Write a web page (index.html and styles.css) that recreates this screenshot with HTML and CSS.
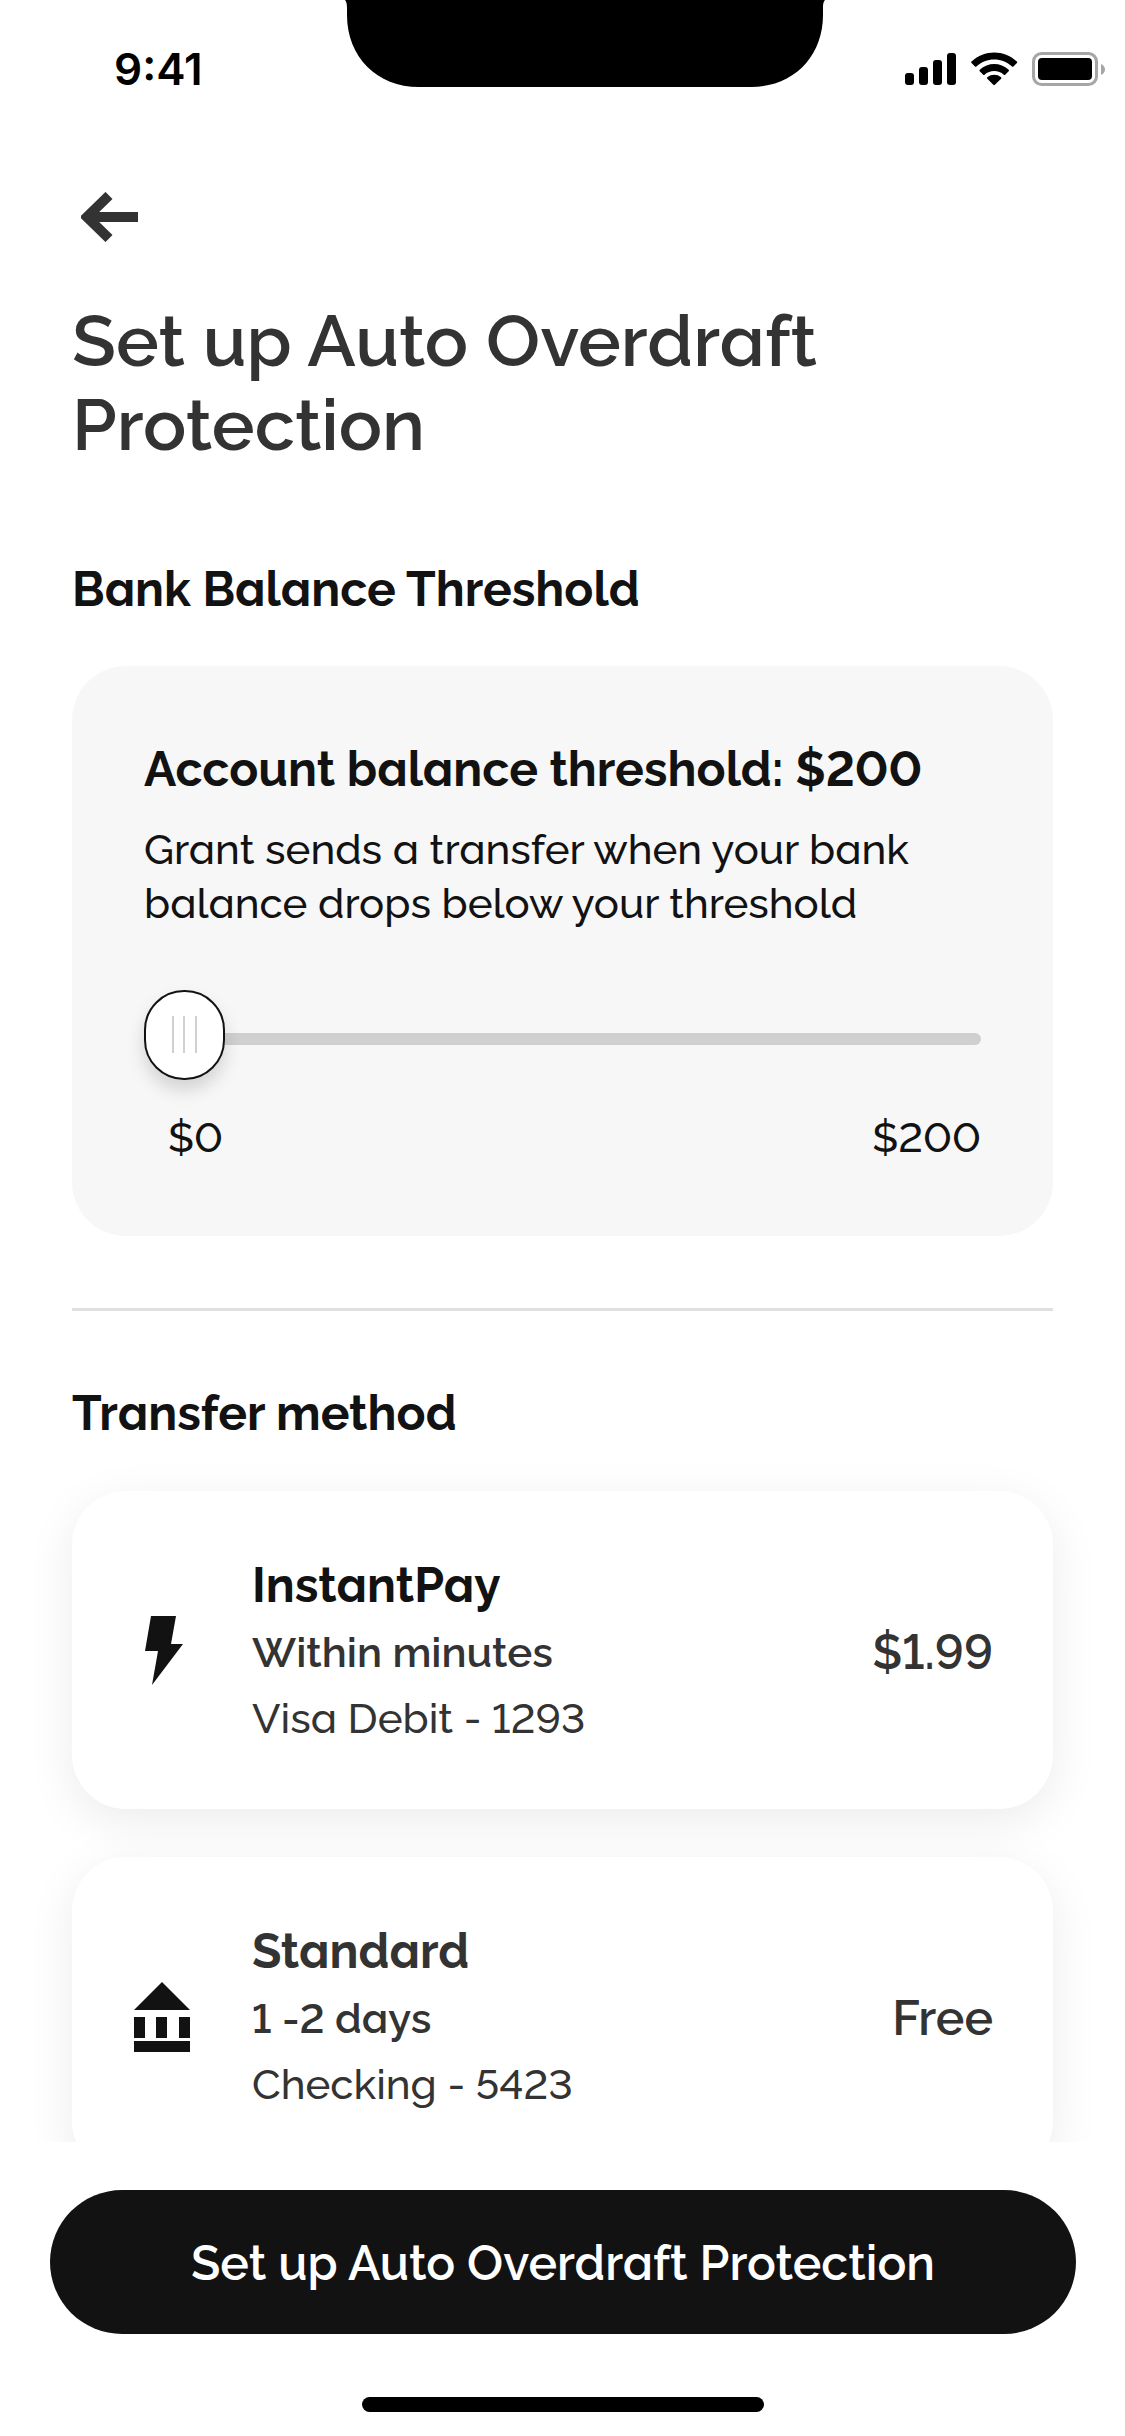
FILE: index.html
```
<!DOCTYPE html>
<html lang="en">
<head>
<meta charset="utf-8">
<meta name="viewport" content="width=device-width, initial-scale=1">
<title>Set up Auto Overdraft Protection</title>
<link rel="stylesheet" href="styles.css">
</head>
<body>
<div class="app">
  <header class="status">
    <span class="status-time">9:41</span>
    <svg class="notch" viewBox="0 0 480 87" aria-hidden="true"><path d="M0 0h480c-1 1-2 3-2 8v7c0 42-30 72-72 72H74C32 87 2 57 2 15V8c0-5-1-7-2-8z"/></svg>
    <svg class="status-icons" viewBox="0 0 202 36" role="img" aria-label="Signal, Wi-Fi and battery">
      <rect x="1" y="21" width="9" height="12" rx="3"/>
      <rect x="15" y="15" width="9" height="18" rx="3"/>
      <rect x="29" y="8" width="9" height="25" rx="3"/>
      <rect x="43" y="1" width="9" height="32" rx="3"/>
      <g transform="translate(-7 0) scale(1.08 1.07)">
        <path d="M90 7c6 0 12 2.400 16.500 6.600.4.400 1 .400 1.300 0l3.200-3.300c.4-.4.4-1 0-1.400C99-2.400 81-2.400 69 8.900c-.4.4-.4 1 0 1.400l3.200 3.300c.3.400.9.400 1.300 0C78 9.400 84 7 90 7z"/>
        <path d="M90 17.800c3.300 0 6.500 1.200 8.900 3.400.4.400 1 .400 1.300 0l3.200-3.300c.4-.4.4-1 0-1.400-7.600-7-19.200-7-26.800 0-.4.4-.4 1 0 1.400l3.200 3.300c.3.400.9.400 1.300 0 2.400-2.200 5.600-3.400 8.900-3.400z"/>
        <path d="M96.400 25c.4-.4.4-1 0-1.400-3.700-3.100-9.100-3.100-12.800 0-.4.4-.4 1 0 1.400l5.600 5.700c.4.400 1 .400 1.400 0z"/>
      </g>
      <rect class="battery-case" x="129.500" y="1.500" width="63" height="31" rx="8"/>
      <rect x="134" y="6" width="54" height="22" rx="4"/>
      <path class="battery-tip" d="M197 12v11c2.500-1 4-3 4-5.500s-1.500-4.500-4-5.500z"/>
    </svg>
  </header>

  <main class="content">
    <button class="back" type="button" aria-label="Back">
      <svg class="back-icon" viewBox="0 0 57 50" aria-hidden="true"><path d="M28 3.500 6 25l22 21.500M7 25h50"/></svg>
    </button>
    <h1 class="title">Set up Auto Overdraft Protection</h1>

    <section class="section">
      <h2 class="section-title">Bank Balance Threshold</h2>
      <div class="threshold">
        <label class="threshold-title" for="threshold">Account balance threshold: $200</label>
        <p class="threshold-text">Grant sends a transfer when your bank balance drops below your threshold</p>
        <input class="slider" id="threshold" type="range" min="0" max="200" value="0">
        <div class="scale"><span>$0</span><span>$200</span></div>
      </div>
    </section>

    <hr class="divider">

    <section class="section">
      <h2 class="section-title">Transfer method</h2>
      <div class="methods">
        <button class="method" type="button">
          <svg class="method-icon" viewBox="0 2 72 72" aria-hidden="true"><path d="M23 2h25l-5 28h12L24 71l6-34H17z"/></svg>
          <span class="method-body">
            <span class="method-name">InstantPay</span>
            <span class="method-time">Within minutes</span>
            <span class="method-account">Visa Debit - 1293</span>
          </span>
          <span class="method-price">$1.99</span>
        </button>
        <button class="method" type="button">
          <svg class="method-icon" viewBox="0 1 72 72" aria-hidden="true"><path d="M34 1 62 29H6zM6 36h11v21H6zM28 36h11v21H28zM51 36h11v21H51zM6 60h56v11H6z"/></svg>
          <span class="method-body">
            <span class="method-name method-name-soft">Standard</span>
            <span class="method-time">1 -2 days</span>
            <span class="method-account">Checking - 5423</span>
          </span>
          <span class="method-price">Free</span>
        </button>
      </div>
    </section>
  </main>

  <footer class="footer">
    <button class="submit" type="button">Set up Auto Overdraft Protection</button>
    <div class="home-indicator"></div>
  </footer>
</div>
</body>
</html>
```
FILE: styles.css
```
* {
  box-sizing: border-box;
}

body {
  margin: 0;
  background: #fff;
  color: #121212;
  font-family: Raleway, "Open Sans", sans-serif;
  /* lining figures and the single-storey "a" */
  font-feature-settings: "lnum", "ss02";
}

button {
  border: 0;
  font: inherit;
  font-feature-settings: inherit;
  color: inherit;
  cursor: pointer;
}

.app {
  display: flex;
  flex-direction: column;
  height: 100vh;
}

/* Status bar */
.status {
  display: grid;
  grid-template-columns: 345fr 480px 300fr;
  height: 132px;
  flex: none;
}

.status-time {
  justify-self: start;
  margin: 42px 0 0 114px;
  font: 600 44px/54px Inter, sans-serif;
  color: #000;
}

.notch {
  width: 480px;
  height: 87px;
}

.status-icons {
  justify-self: end;
  width: 202px;
  height: 36px;
  margin: 52px 19px 0 0;
}

.battery-case {
  fill: none;
  stroke: #a6a6a6;
  stroke-width: 3;
}

.battery-tip {
  fill: #a6a6a6;
}

/* Scrolling content */
.content {
  flex: 1;
  min-height: 0;
  padding: 60px 72px 48px;
  overflow: hidden auto;
  scrollbar-width: none;
}

.back {
  display: block;
  padding: 0 9px;
  background: none;
}

.back-icon {
  display: block;
  width: 57px;
  height: 50px;
  fill: none;
  stroke: #333;
  stroke-width: 10;
}

.title {
  margin: 57px 0 0;
  font-size: 72px;
  line-height: 84px;
  font-weight: 600;
  color: #333;
}

.section {
  display: flex;
  flex-direction: column;
}

.title + .section {
  margin-top: 92px;
}

.section-title {
  margin: 0;
  font-size: 48px;
  line-height: 60px;
  font-weight: 700;
}

.threshold {
  display: flex;
  flex-direction: column;
  margin-top: 47px;
  padding: 73px 72px 71px;
  border-radius: 54px;
  background: #f7f7f7;
}

.threshold-title {
  font-size: 48px;
  line-height: 60px;
  font-weight: 700;
}

.threshold-text {
  margin: 24px 0 0;
  font-size: 42px;
  line-height: 54px;
  font-weight: 500;
}

.slider {
  appearance: none;
  width: 100%;
  height: 90px;
  margin: 63px 0 0;
  background: none;
}

.slider::-webkit-slider-runnable-track {
  height: 12px;
  border-radius: 6px;
  background: #cfd1cf;
}

.slider::-webkit-slider-thumb {
  appearance: none;
  width: 81px;
  height: 90px;
  margin-top: -43px;
  border: 2px solid #121212;
  border-radius: 40px;
  background:
    linear-gradient(#d0d0d0, #d0d0d0) 26px 24px / 2px 37px no-repeat,
    linear-gradient(#d0d0d0, #d0d0d0) 37px 24px / 2px 37px no-repeat,
    linear-gradient(#d0d0d0, #d0d0d0) 49px 24px / 2px 37px no-repeat,
    #fff;
  box-shadow: 0 10px 18px rgba(0, 0, 0, .15);
}

.scale {
  display: flex;
  justify-content: space-between;
  margin-top: 27px;
  padding-left: 24px;
  font-size: 42px;
  line-height: 54px;
  font-weight: 500;
}

.divider {
  width: 100%;
  height: 3px;
  margin: 72px 0;
  border: 0;
  background: #e0e0e0;
}

/* Transfer methods */
.methods {
  display: flex;
  flex-direction: column;
  gap: 48px;
  margin-top: 48px;
}

.method {
  display: flex;
  align-items: center;
  padding: 60px 60px 57px 56px;
  border-radius: 54px;
  background: #fff;
  box-shadow: 0 12px 48px rgba(0, 0, 0, .08);
  color: #333;
  text-align: left;
}

.method-icon {
  flex: none;
  width: 72px;
  height: 72px;
  margin-right: 52px;
  fill: #121212;
}

.method-body {
  display: flex;
  flex: 1;
  flex-direction: column;
}

.method-name {
  font-size: 48px;
  line-height: 69px;
  font-weight: 700;
  color: #121212;
}

.method-name-soft {
  color: #333;
}

.method-time,
.method-account {
  font-size: 42px;
  line-height: 66px;
  font-weight: 500;
}

.method-time {
  font-weight: 600;
}

.method-price {
  font-size: 48px;
  font-weight: 600;
}

/* Footer */
.footer {
  flex: none;
  padding: 48px 49px 24px 50px;
}

.submit {
  display: block;
  width: 100%;
  height: 144px;
  padding: 2px 0 0;
  border-radius: 72px;
  background: #121212;
  color: #fff;
  font-size: 48px;
  font-weight: 600;
}

.home-indicator {
  width: 402px;
  height: 15px;
  margin: 63px auto 0;
  border-radius: 8px;
  background: #000;
}
```
